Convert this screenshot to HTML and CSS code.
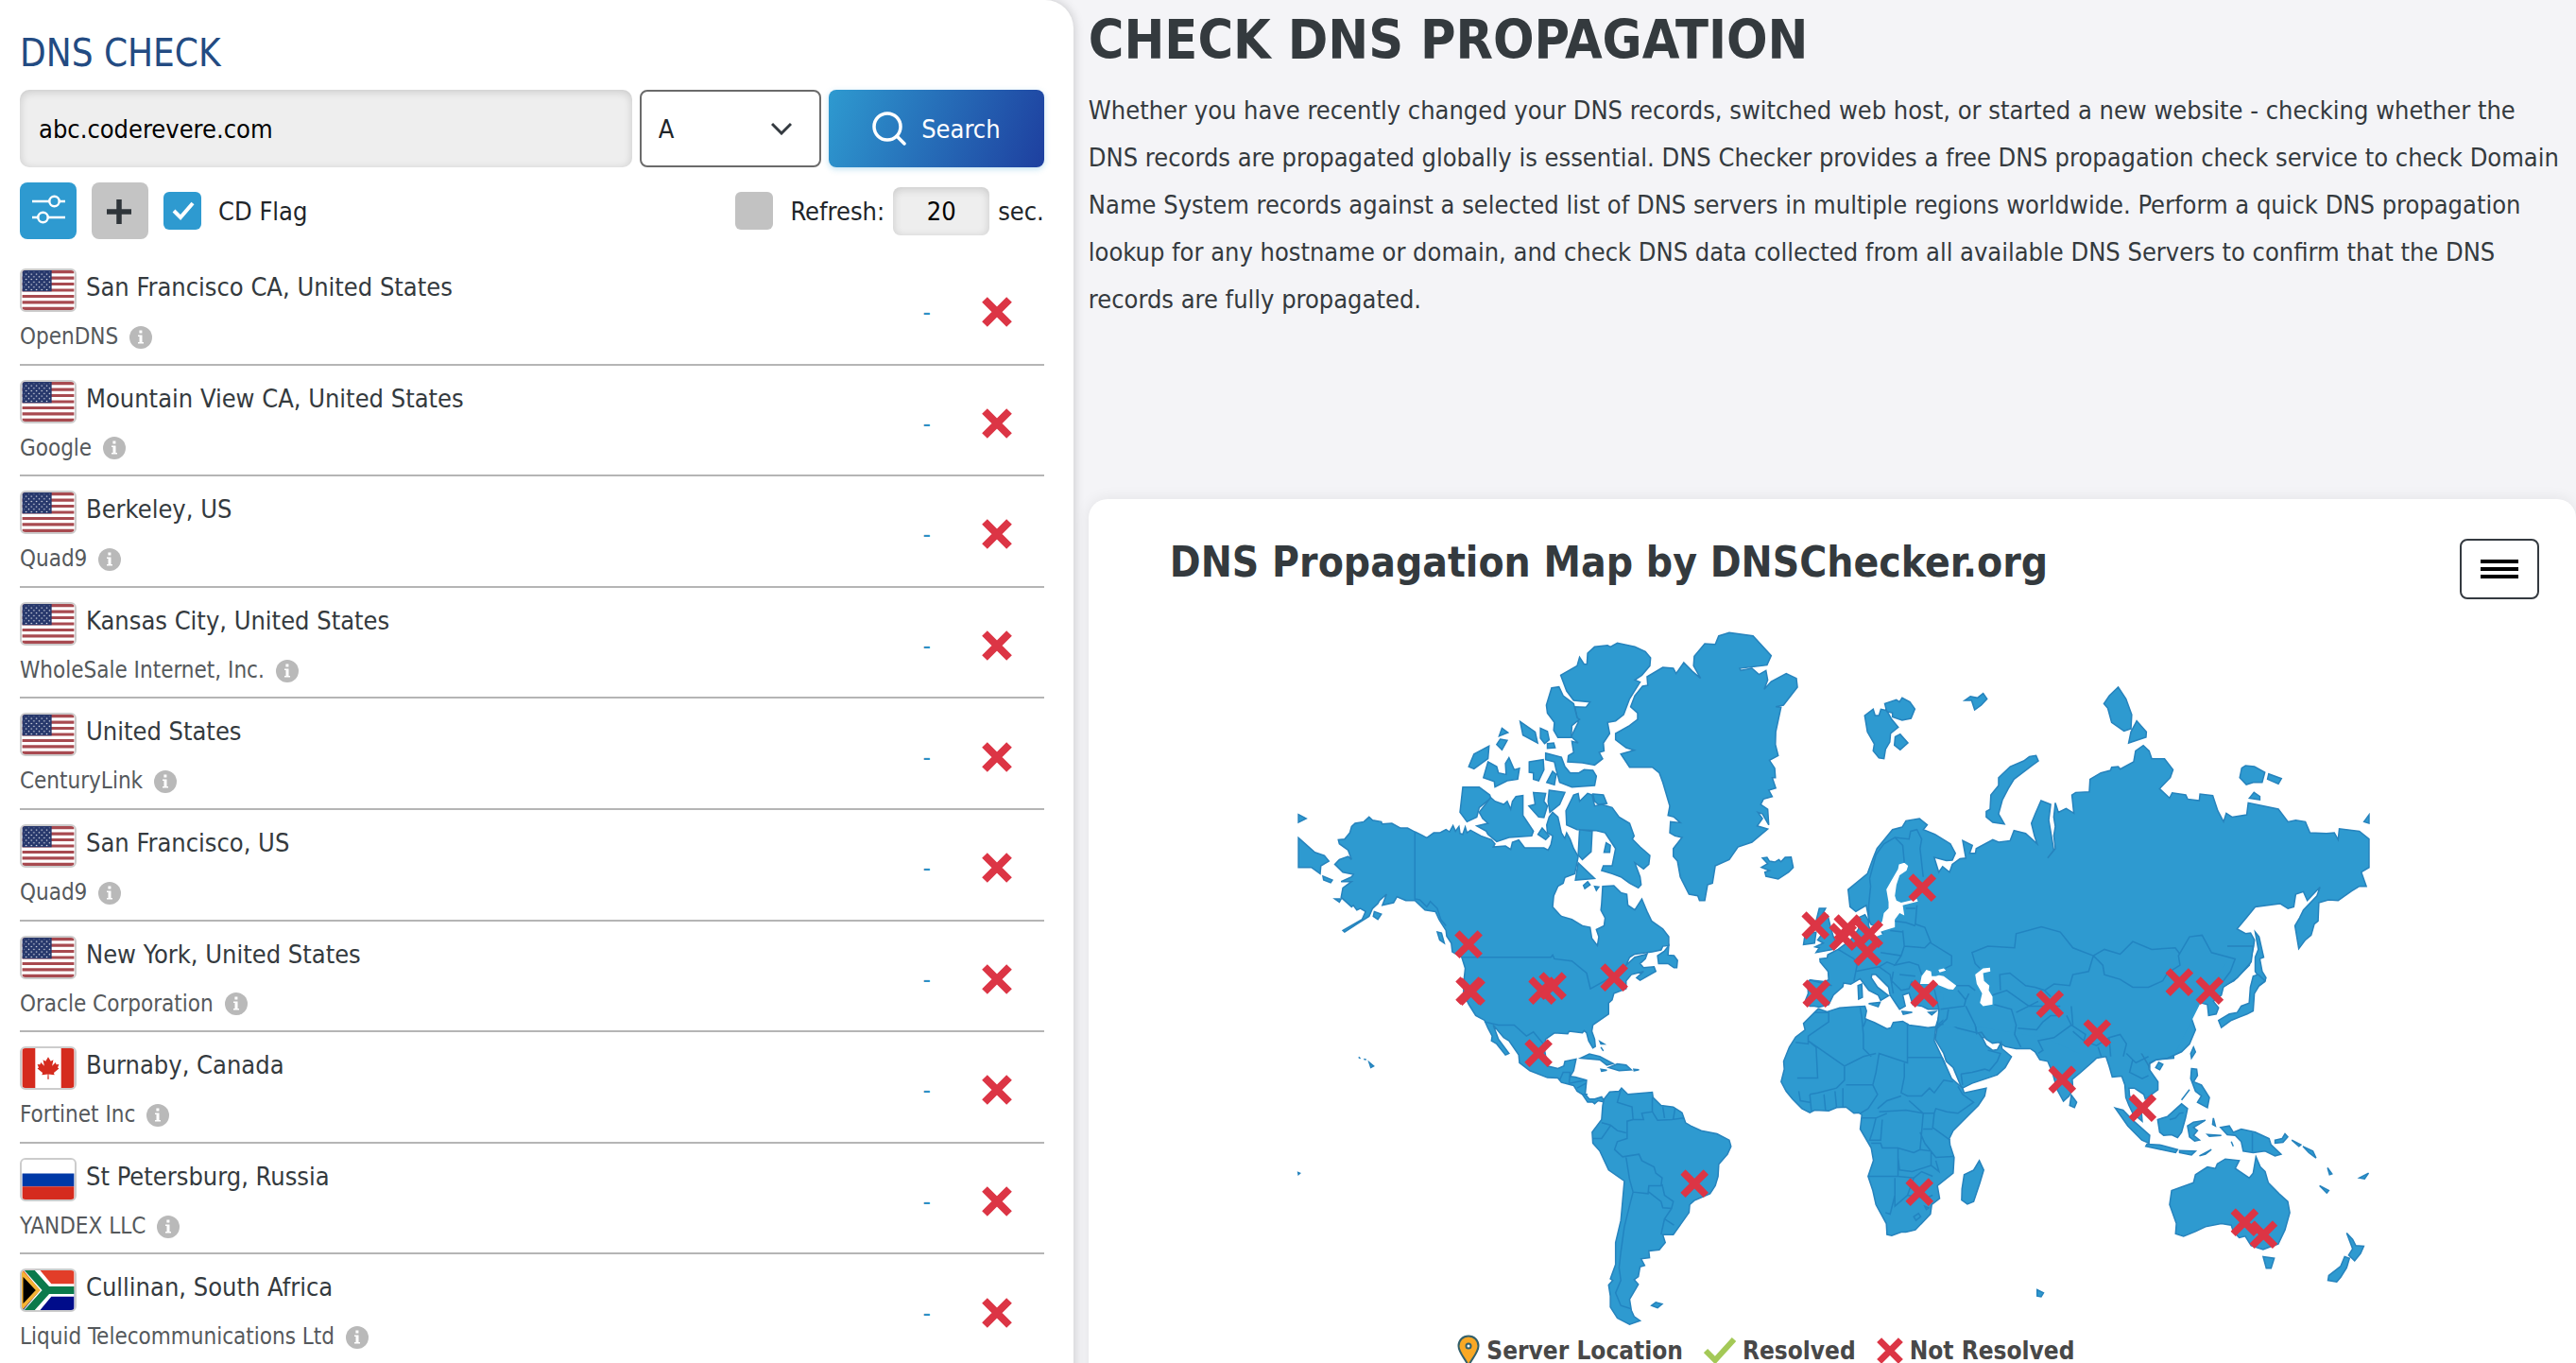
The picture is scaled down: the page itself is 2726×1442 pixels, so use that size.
FILE: index.html
```html
<!DOCTYPE html>
<html lang="en">

<head>
  <meta charset="UTF-8" />
  <meta name="viewport" content="width=device-width, initial-scale=1.0" />
  <title>DNS Checker - DNS Propagation Check</title>
  <link rel="stylesheet" href="styles.css">
</head>

<body>
  <!-- shared icons -->
  <svg class="sprite" aria-hidden="true">
    <defs>
      <pattern id="stars" width="6" height="6" patternUnits="userSpaceOnUse">
        <circle cx="1.5" cy="1.5" r="0.8" fill="#fff" />
        <circle cx="4.5" cy="4.5" r="0.8" fill="#fff" />
      </pattern>
    </defs>
    <symbol id="cross" viewBox="0 0 32 32">
      <path d="M3 3L29 29M29 3L3 29" fill="none" stroke="#dc3545" stroke-width="8" />
    </symbol>
    <symbol id="info" viewBox="0 0 24 24">
      <circle cx="12" cy="12" r="12" fill="#b9b9b9" />
      <path d="M10.400 4.500h3v3h-3zM9 9.500h4.500v7.500h1.500v1.500H9V17h1.500v-6H9z" fill="#fff" />
    </symbol>
    <symbol id="flag-us" viewBox="0 0 60 46">
      <path d="M0 0h60v46H0z" fill="#fff" />
      <path d="M0 1.800h60M0 8.800h60M0 15.900h60M0 23h60M0 30.100h60M0 37.200h60M0 44.300h60" stroke="#a84a50" stroke-width="3.500" />
      <path d="M0 0h34v24.500H0z" fill="#26376b" />
      <path d="M2 2h31v22H2z" fill="url(#stars)" />
    </symbol>
    <symbol id="flag-ca" viewBox="0 0 60 46">
      <path d="M0 0h60v46H0z" fill="#fff" />
      <path d="M0 0h15v46H0zM45 0h15v46H45z" fill="#d52b1e" />
      <path d="M30 10l-3 5-3-1.500 1.500 7-4-4-1 2.500-3-.5 1.500 4-1.500 1 6 5-.8 2.500 6.800-1-.3 6h1.600l-.3-6 6.800 1-.8-2.500 6-5-1.500-1 1.500-4-3 .5-1-2.500-4 4 1.500-7-3 1.500z" fill="#d52b1e" />
    </symbol>
    <symbol id="flag-ru" viewBox="0 0 60 46">
      <path d="M0 0h60v16H0z" fill="#fff" />
      <path d="M0 16h60v15H0z" fill="#0039a6" />
      <path d="M0 31h60v15H0z" fill="#d52b1e" />
    </symbol>
    <symbol id="flag-za" viewBox="0 0 60 46">
      <path d="M0 0h60v23H0z" fill="#e23d28" />
      <path d="M0 23h60v23H0z" fill="#000c8a" />
      <path d="M6 -6L30 23 6 52M30 23H60" fill="none" stroke="#fff" stroke-width="15" />
      <path d="M-4 -4L0 0 21 23 0 46z" fill="#f5b335" />
      <path d="M3 -6L29 23 3 52M29 23H60" fill="none" stroke="#0b7a4b" stroke-width="9" />
      <path d="M0 5L17 23 0 41z" fill="#000" stroke="#f5b335" stroke-width="2" />
    </symbol>
  </svg>

  <div class="page">
    <section class="checker">
      <h2 class="checker-title">DNS CHECK</h2>

      <form class="search-form">
        <input class="domain-input" type="text" aria-label="Domain" value="abc.coderevere.com" />
        <select class="record-select" aria-label="Record type">
          <option>A</option>
        </select>
        <button class="search-btn" type="button">
          <svg viewBox="0 0 36 36" fill="none" stroke="#fff" stroke-width="3.500" stroke-linecap="round">
            <circle cx="16" cy="16" r="14" />
            <path d="M26 26L34 34" />
          </svg>
          Search
        </button>
      </form>

      <div class="options">
        <button class="icon-btn filter-btn" type="button" aria-label="Filters">
          <svg viewBox="0 0 60 60" fill="none" stroke="#fff" stroke-width="2.500">
            <path d="M13 20H31M42 20H48M13 37H19M30 37H48" />
            <circle cx="36.500" cy="20" r="5.200" />
            <circle cx="24.500" cy="37" r="5.200" />
          </svg>
        </button>
        <button class="icon-btn add-btn" type="button" aria-label="Add server">
          <svg viewBox="0 0 60 60" fill="none" stroke="#2f353a" stroke-width="5.500">
            <path d="M29 18V44M16 31H42" />
          </svg>
        </button>
        <label class="check-label">
          <input type="checkbox" checked />
          CD Flag
        </label>
        <div class="refresh">
          <label class="check-label">
            <input type="checkbox" />
            Refresh:
          </label>
          <input class="seconds-input" type="text" aria-label="Refresh seconds" value="20" />
          <span>sec.</span>
        </div>
      </div>

      <ul class="servers">
        <li class="server">
          <div class="location"><svg class="flag"><use href="#flag-us" /></svg>San Francisco CA, United States</div>
          <div class="provider">OpenDNS <svg class="info"><use href="#info" /></svg></div>
          <span class="result">-</span>
          <svg class="status"><use href="#cross" /></svg>
        </li>
        <li class="server">
          <div class="location"><svg class="flag"><use href="#flag-us" /></svg>Mountain View CA, United States</div>
          <div class="provider">Google <svg class="info"><use href="#info" /></svg></div>
          <span class="result">-</span>
          <svg class="status"><use href="#cross" /></svg>
        </li>
        <li class="server">
          <div class="location"><svg class="flag"><use href="#flag-us" /></svg>Berkeley, US</div>
          <div class="provider">Quad9 <svg class="info"><use href="#info" /></svg></div>
          <span class="result">-</span>
          <svg class="status"><use href="#cross" /></svg>
        </li>
        <li class="server">
          <div class="location"><svg class="flag"><use href="#flag-us" /></svg>Kansas City, United States</div>
          <div class="provider">WholeSale Internet, Inc. <svg class="info"><use href="#info" /></svg></div>
          <span class="result">-</span>
          <svg class="status"><use href="#cross" /></svg>
        </li>
        <li class="server">
          <div class="location"><svg class="flag"><use href="#flag-us" /></svg>United States</div>
          <div class="provider">CenturyLink <svg class="info"><use href="#info" /></svg></div>
          <span class="result">-</span>
          <svg class="status"><use href="#cross" /></svg>
        </li>
        <li class="server">
          <div class="location"><svg class="flag"><use href="#flag-us" /></svg>San Francisco, US</div>
          <div class="provider">Quad9 <svg class="info"><use href="#info" /></svg></div>
          <span class="result">-</span>
          <svg class="status"><use href="#cross" /></svg>
        </li>
        <li class="server">
          <div class="location"><svg class="flag"><use href="#flag-us" /></svg>New York, United States</div>
          <div class="provider">Oracle Corporation <svg class="info"><use href="#info" /></svg></div>
          <span class="result">-</span>
          <svg class="status"><use href="#cross" /></svg>
        </li>
        <li class="server">
          <div class="location"><svg class="flag"><use href="#flag-ca" /></svg>Burnaby, Canada</div>
          <div class="provider">Fortinet Inc <svg class="info"><use href="#info" /></svg></div>
          <span class="result">-</span>
          <svg class="status"><use href="#cross" /></svg>
        </li>
        <li class="server">
          <div class="location"><svg class="flag"><use href="#flag-ru" /></svg>St Petersburg, Russia</div>
          <div class="provider">YANDEX LLC <svg class="info"><use href="#info" /></svg></div>
          <span class="result">-</span>
          <svg class="status"><use href="#cross" /></svg>
        </li>
        <li class="server">
          <div class="location"><svg class="flag"><use href="#flag-za" /></svg>Cullinan, South Africa</div>
          <div class="provider">Liquid Telecommunications Ltd <svg class="info"><use href="#info" /></svg></div>
          <span class="result">-</span>
          <svg class="status"><use href="#cross" /></svg>
        </li>
      </ul>
    </section>

    <main class="content">
      <div class="intro">
        <h1>CHECK DNS PROPAGATION</h1>
        <p>Whether you have recently changed your DNS records, switched web host, or started a new website - checking whether the DNS records are propagated globally is essential. DNS Checker provides a free DNS propagation check service to check Domain Name System records against a selected list of DNS servers in multiple regions worldwide. Perform a quick DNS propagation lookup for any hostname or domain, and check DNS data collected from all available DNS Servers to confirm that the DNS records are fully propagated.</p>
      </div>

      <section class="map-card">
        <div class="map-header">
          <h2>DNS Propagation Map by DNSChecker.org</h2>
          <button class="menu-btn" type="button" aria-label="Menu">
            <svg viewBox="0 0 40 24" stroke="#000" stroke-width="4"><path d="M0 4H40M0 12H40M0 20H40" /></svg>
          </button>
        </div>

        <svg class="map" viewBox="0 0 1133 742" role="img" aria-label="World map of server results">
          <!-- North America and Greenland -->
          <g transform="translate(-12 -12) scale(0.3699 0.3333)">
            <path class="land" d="M240 640L250 650 275 655 277 662 305 660 330 675 350 675 371 687 390 697 405 706 425 690 442 690 460 680 470 687 480 667 487 685 497 670 500 692 508 695 515 672 520 690 530 682 560 700 590 712 600 725 595 735 630 732 645 743 650 720 668 713 685 738 740 738 752 745 760 728 765 700 750 690 748 665 755 640 765 625 780 640 790 690 800 708 805 690 815 710 825 740 838 765 832 800 828 820 800 832 795 850 780 860 768 890 765 925 785 950 790 955 820 965 850 985 872 990 877 1025 893 1048 897 1020 890 997 912 985 915 960 903 935 905 915 908 860 940 858 960 880 977 885 980 920 1000 935 1020 900 1035 940 1048 970 1080 995 1097 1020 1097 1048 1080 1050 1075 1062 1050 1068 1000 1075 985 1085 975 1110 1000 1085 1035 1075 1030 1090 1015 1105 1025 1118 1055 1115 1060 1130 1015 1158 1005 1150 1025 1130 990 1140 975 1160 975 1185 940 1200 935 1220 925 1230 925 1265 880 1300 877 1320 885 1345 887 1368 880 1373 868 1350 862 1325 855 1318 850 1325 812 1320 808 1328 770 1325 745 1345 742 1380 750 1430 780 1438 797 1430 800 1415 832 1408 825 1445 815 1463 830 1465 862 1475 858 1520 870 1535 885 1535 905 1528 915 1545 895 1540 885 1550 880 1545 865 1545 850 1520 835 1510 825 1492 790 1482 780 1468 750 1467 700 1445 670 1420 668 1395 640 1350 625 1340 595 1300 610 1345 640 1390 630 1395 605 1360 590 1350 592 1335 580 1310 570 1285 545 1270 525 1235 510 1200 512 1150 515 1120 505 1085 478 1068 475 1040 462 1018 460 1000 440 965 430 940 400 935 371 905 345 905 320 893 310 912 278 920 290 885 270 905 265 915 250 930 240 955 205 980 170 1005 165 1000 220 965 230 940 215 930 205 935 195 920 190 925 160 895 165 865 190 845 160 845 190 830 195 822 165 815 142 790 155 775 180 765 190 775 180 745 155 725 152 712 170 710 185 690 190 670 200 660 225 655Z" />
            <path class="land" d="M1240 65L1270 55 1338 65 1390 128 1378 158 1300 168 1303 175 1335 168 1355 188 1375 175 1380 205 1370 235 1390 210 1433 185 1462 200 1465 228 1425 285 1403 290 1418 292 1403 370 1402 410 1410 445 1385 460 1400 485 1402 515 1393 515 1403 548 1383 555 1393 575 1368 583 1360 600 1380 615 1383 665 1365 630 1352 625 1365 645 1350 668 1380 678 1335 720 1295 735 1270 775 1230 795 1222 850 1208 855 1200 905 1185 905 1180 890 1155 885 1130 830 1122 780 1110 765 1110 740 1135 705 1115 700 1100 690 1102 655 1130 658 1112 640 1095 635 1100 605 1080 530 1070 500 1050 482 985 482 960 440 998 428 975 420 945 395 945 375 985 350 1008 330 1008 310 988 290 1000 255 1022 225 1037 222 1035 195 1080 165 1110 168 1118 185 1140 150 1165 178 1188 200 1168 160 1170 130 1200 90 1230 92Z" />
            <path class="land" d="M865 120L885 100 922 95 930 100 950 88 1000 100 1030 115 1045 135 1043 160 1020 190 1000 205 1015 212 985 265 968 315 945 335 922 340 928 375 910 405 912 430 898 435 908 455 885 475 850 468 808 465 810 445 825 435 820 400 838 405 818 385 838 340 828 290 860 292 872 275 825 270 805 240 788 190 835 160 842 133 855 155 863 155Z" />
            <path class="land" d="M762 230L783 227 795 255 825 280 835 325 842 330 820 350 818 388 780 388 768 365 770 340 750 310 747 285Z" />
            <path class="land" d="M672 337L715 370 722 405 680 380ZM730 358L750 368 755 395 742 407 730 390ZM750 407L768 405 772 420 750 422ZM620 358L637 372 612 383ZM615 393L635 397 620 427 605 410ZM583 415L580 455 540 487 525 480 540 440ZM580 465L605 480 610 500 632 505 630 470 640 452 655 490 670 485 665 520 635 525 600 545 598 527 567 515Z" />
            <path class="land" d="M698 465L738 458 740 490 725 525 710 520 710 500 698 498ZM765 495L775 505 770 538 748 530ZM745 437L790 450 800 480 815 500 840 500 855 490 880 492 890 510 885 540 820 545 785 530 775 490 770 465 745 458Z" />
            <path class="land" d="M508 545L555 545 585 570 588 580 555 610 548 640 520 655 500 625Z" />
            <path class="land" d="M588 578L600 590 625 600 635 590 645 615 650 590 660 575 680 572 680 635 710 685 705 700 640 705 605 718 580 695 575 685 548 668 580 660 565 645 555 625Z" />
            <path class="land" d="M710 562L745 565 740 590 750 605 740 642 725 640 697 605 715 600ZM755 555L800 562 785 600 757 625 752 590ZM735 675L755 700 745 712 723 695ZM803 620L825 570 838 565 842 590 865 565 878 570 885 605 905 600 935 610 955 640 985 660 998 700 993 710 1015 735 1043 762 1040 790 1025 805 1000 785 1015 830 1018 855 1010 865 985 850 960 830 935 820 905 810 910 795 935 795 945 740 915 690 890 683 835 680 805 665ZM842 680L878 685 875 750 850 775 838 760ZM880 567L910 570 920 597 895 600 885 590ZM918 722L930 730 928 752 912 752ZM838 785L885 835 830 840ZM865 845L872 855 857 867 853 857ZM885 860L897 862 890 873Z" />
            <path class="land" d="M1365 770L1378 768 1385 780 1400 783 1412 775 1418 782 1430 768 1447 767 1453 800 1440 815 1410 837 1375 828 1372 815 1385 810 1362 800 1380 788ZM1097 1048L1085 1065 1065 1080 1068 1105 1095 1105 1112 1118 1120 1118 1122 1095 1112 1080 1095 1078ZM38 632L60 645 38 657ZM38 706L85 752 112 762 125 780 102 795 100 820 75 800 38 800ZM108 828L135 840 130 848 110 840ZM255 940L275 948 265 965 252 955ZM435 1005L447 1008 455 1040 442 1030ZM142 900L160 900 155 910Z" />
            <path class="border" d="M371 687V900L385 903 405 925 415 908 435 930 445 965 460 985M505 1085H760L765 1078 770 1090 820 1097 862 1135 873 1185 930 1150 975 1110M570 1290L610 1300 655 1300 690 1335 710 1322 742 1365M785 1475L795 1450 815 1450 812 1485 860 1475M835 1500L860 1485M850 1520L865 1520" />
          </g>

          <!-- Caribbean and South America -->
          <g transform="translate(-12 378) scale(0.3699 0.3333)">
            <path class="land" d="M912 365L928 342 955 340 962 330 980 350 1050 343 1052 360 1075 385 1110 390 1135 408 1145 440 1160 450 1190 465 1235 475 1270 495 1275 515 1265 540 1240 572 1238 610 1230 640 1215 665 1170 687 1157 700 1155 725 1110 795 1080 795 1087 820 1070 843 1040 847 1042 868 1018 872 1028 893 1015 897 1010 928 998 938 1010 953 985 1000 990 1035 998 1055 1015 1068 985 1080 950 1060 930 1025 930 990 925 955 937 940 930 935 945 890 945 820 960 750 970 625 925 590 900 530 880 505 878 470 905 430 908 385Z" />
            <path class="land" d="M845 235L870 222 900 230 938 252 920 257 900 240ZM925 265L950 253 975 257 990 272 955 275ZM903 270L920 273 905 277ZM997 270L1012 272 998 275ZM900 182L912 190 903 190ZM903 200L910 212M210 232L215 236M225 238L232 240M240 248L253 260 245 265ZM37 598L42 600 38 604ZM1048 1020L1060 1010 1078 1015 1065 1027Z" />
            <path class="border" d="M960 335L950 375 992 390 995 430 1025 430 1020 410 1050 405 1050 360M1050 405L1065 432 1105 430 1140 425M1080 390L1085 425M1115 395L1110 428M995 430L978 435 978 490 950 500 942 525 965 548 1012 540 1020 560 1055 580 1060 600 1078 615 1075 640 1040 640 1038 665 995 660 985 620 975 550M905 440L930 447 950 465 975 472M930 450L905 490 880 490M1040 660L1075 690 1080 710 1105 712 1110 690 1085 670 1078 635M1105 712L1085 745 1112 765M1085 745L1075 795M995 660L988 690 970 770 960 850 955 900 960 940 945 980 960 1020 988 1030" />
          </g>

          <!-- Russia and the Arctic -->
          <g transform="translate(508 -12) scale(0.4082 0.3333)">
            <path class="land" d="M320 1100L262 985 245 982 240 970 232 920 205 940 190 925 185 870 235 820 250 770 260 740 300 680 325 672 335 652 370 645 390 665 380 680 410 695 450 725 463 755 455 777 440 778 408 768 420 815 430 797 448 815 455 790 475 772 490 770 482 715 507 730 500 755 515 755 517 740 560 712 575 720 605 715 615 683 645 692 675 725 668 700 660 660 670 630 685 588 710 600 705 650 712 700 718 745 702 770 722 740 718 700 722 670 718 640 722 595 730 625 750 613 770 628 765 570 775 562 810 560 812 520 840 500 865 492 868 482 885 480 890 488 925 465 930 430 950 413 965 430 972 455 1005 455 1027 490 1020 515 992 550 1018 580 1025 563 1060 570 1065 583 1095 588 1097 567 1130 572 1143 620 1158 655 1165 628 1180 640 1218 633 1222 595 1300 615 1325 655 1345 650 1370 655 1382 690 1425 692 1445 690 1455 712 1458 677 1510 685 1535 710 1535 800 1515 815 1528 860 1510 860 1490 875 1455 905 1430 903 1405 912 1403 970 1393 980 1385 1015 1370 1030 1353 1058 1343 985 1355 960 1365 935 1400 890 1408 862 1375 905 1365 877 1345 885 1340 925 1325 930 1305 915 1240 925 1220 955 1193 995 1215 1010 1228 1008 1238 1030 1236 1050 1225 1110 1185 1160 1160 1175 900 1300 500 1300Z" />
            <path class="land" d="M228 318L250 298 255 318 265 318 270 298 285 302 298 330 315 355 295 375 293 402 282 425 278 455 265 452 250 430 253 408 235 370ZM280 280L310 268 318 275 325 262 345 275 358 297 348 327 325 333 300 322 300 310 285 305ZM320 377L340 405 320 427 305 412 307 385ZM487 270L502 257 520 262 535 248 545 265 530 285 513 300 505 270Z" />
            <path class="land" d="M672 445L678 462 660 478 615 520 600 550 585 585 575 630 590 662 560 657 543 640 543 622 553 615 555 570 575 540 575 515 605 480 640 462 655 448ZM885 228L905 265 920 315 918 360 900 367 868 340 858 295 848 280 862 255ZM933 335L958 370 957 387 912 405 918 370ZM1205 485L1215 477 1238 480 1265 498 1258 530 1235 530 1217 537 1200 515ZM1275 503L1308 518 1300 535 1272 520ZM1237 562L1252 575 1252 585 1225 580ZM1535 633V660L1522 655Z" />
            <path class="land" d="M1240 1005L1250 1020 1262 1085 1252 1090 1258 1130 1268 1150 1265 1162 1245 1180 1240 1170 1248 1145 1240 1130 1240 1085 1248 1060Z" />
          </g>

          <!-- Europe -->
          <g transform="translate(518 188) scale(0.3333)">
            <path class="land" d="M300 480L262 385 262 370 250 350 232 358 230 395 205 430 165 460 132 477 130 487 107 490 108 500 133 530 135 557 120 562 75 557 68 565 70 600 62 620 75 640 90 640 105 643 135 635 150 605 180 578 182 567 205 570 235 553 262 590 292 605 300 622 325 607 290 580 270 550 272 540 285 540 325 580 330 605 350 635 360 650 378 640 370 605 390 598 402 635 430 640 450 650 485 650 487 665 475 705 480 740 700 740 700 480Z" />
            <path class="land" d="M105 330L125 330 115 348 132 352 140 385 150 420 160 440 150 460 95 470 105 455 92 452 118 440 100 430 115 410 95 370ZM60 412L95 405 90 440 55 445ZM262 632L298 628 292 642ZM228 575L240 570 242 612 230 618ZM368 657L400 660 372 666ZM452 660L475 657 462 668Z" />
          </g>

          <!-- Arabia, India and Indochina -->
          <g transform="translate(528 388) scale(0.3333)">
            <path class="land" d="M420 -100L455 50 450 105 443 145 470 190 478 215 500 235 523 290 530 300 560 285 640 258 665 235 685 200 655 175 652 155 640 178 625 180 605 165 595 145 580 125 590 123 605 145 625 158 645 155 665 168 700 175 745 175 760 185 775 210 800 215 815 250 830 305 850 342 868 325 880 300 878 272 905 250 945 215 955 205 985 200 995 230 1005 265 1035 262 1045 290 1048 330 1058 355 1070 380 1100 405 1098 380 1080 345 1060 325 1058 300 1075 300 1105 320 1110 335 1150 305 1150 280 1122 240 1120 225 1145 210 1200 205 1200 0Z" />
            <path class="land" d="M60 60L72 48 100 58 140 45 180 42 220 40 225 55 220 80 250 92 290 112 303 108 310 92 340 88 360 100 420 108 445 105 440 150 475 225 495 270 530 300 535 315 605 300 600 325 580 355 550 385 500 435 488 460 490 480 503 520 500 570 450 610 457 650 432 670 428 700 380 750 350 757 335 757 305 768 290 765 288 730 255 670 245 625 230 580 247 530 240 490 205 430 210 385 200 378 185 380 160 360 130 362 105 372 60 370 45 378 20 365 -10 335 -30 310 -46 280 -36 240 -38 215 -20 170 0 138 30 115 25 95Z" />
            <path class="land" d="M583 530L597 560 585 600 565 660 545 668 527 655 528 620 535 575 565 560ZM875 322L892 345 885 362 870 355Z" />
            <path class="border" d="M60 60L105 60 105 90 40 135V160L0 155M40 150L155 230 215 200 255 190M40 150L65 170 70 268H5M205 45L210 75 215 130 215 175 240 200M225 80L215 105M355 95V220L265 190 255 250 245 290M355 203H465M345 220V265L335 315 355 325 400 325 425 300 440 315 470 275 500 280M465 203L475 225M155 230V275L130 300 70 315 45 320M160 290L245 290 260 320 230 365 205 380M150 300L150 360M90 320L95 370M125 310L130 362M45 320L50 372M10 310L15 340 45 345M260 365L290 340 335 325M265 375L350 370 405 380 400 440 395 495 375 505 325 490 325 580H230M405 380L360 340M405 380H440L445 365 480 375 515 380 565 345 530 320 515 295M440 380L435 425 490 465M405 430H435M395 440L410 475 445 520 500 517M210 395H255L290 380M255 395L245 435 235 465 270 465 275 400M240 475H270L275 490 325 490M325 520L330 560 370 565 430 545V500L395 495M430 545L455 565 445 530M235 580H325L375 585 400 565 435 580M375 585L355 640 315 675V585M315 640L300 700 285 695M355 640L410 650 435 640M375 708L390 698 397 708 382 720ZM410 675L422 680 415 685Z" />
            <path class="border" d="M525 255L560 250 600 240 615 245 640 215 650 190 610 180M450 100L485 95 515 110 575 125 570 95 540 60 545 30M450 100L480 75 510 45M525 255L530 290" />
          </g>

          <!-- East Asia, Oceania and Australia -->
          <g transform="translate(488 338) scale(0.4209 0.3333)">
            <path class="land" d="M900 200L985 385 985 370 1000 360 1030 355 1065 335 1085 310 1100 265 1085 210 1100 188 1075 180 1085 165 1098 150 1100 175 1130 185 1133 220 1152 215 1158 195 1145 175 1165 155 1170 130 1205 100 1240 50 1245 0H900Z" />
            <path class="land" d="M1245 95L1258 90 1275 110 1260 125 1248 150 1245 205 1230 215 1210 225 1190 235 1165 258 1158 235 1185 215 1205 210 1215 190 1235 180 1238 130ZM1008 368L1018 375 1010 392 1000 385ZM1095 320L1100 335 1090 355 1088 340ZM1090 388L1103 390 1105 410 1095 430 1115 440 1125 460 1135 480 1130 512 1105 495 1115 475 1100 460 1088 420ZM1085 455L1065 488" />
            <path class="land" d="M898 513L918 520 945 555 985 600 983 625 965 615 930 570ZM978 628L1010 630 1055 645 1050 655 975 635ZM1060 648L1100 650 1090 662 1060 655ZM1110 665L1140 645 1125 660ZM1005 550L1030 540 1065 500 1080 515 1075 545 1065 590 1055 607 1040 598 1020 600 1010 590ZM1080 570L1095 558 1125 552 1095 575 1105 585 1095 600 1110 615 1098 618 1085 605ZM1145 545L1150 570 1143 565ZM1130 597L1165 600 1135 603ZM1163 575L1185 570 1195 590 1215 580 1250 590 1285 610 1290 630 1315 660 1300 665 1275 650 1245 655 1220 650 1215 620 1200 600 1180 598ZM1300 615L1318 610 1325 595 1332 605 1320 622 1300 625ZM1342 615L1365 630 1360 635ZM1370 635L1395 650 1403 672 1385 655ZM1190 620L1195 635" />
            <path class="land" d="M1252 668L1263 700 1275 715 1283 750 1310 785 1332 810 1337 845 1325 900 1308 945 1285 955 1270 962 1240 950 1225 920 1210 925 1195 905 1190 885 1165 880 1125 890 1100 905 1070 920 1050 912 1052 880 1035 820 1040 775 1095 750 1100 725 1130 700 1150 705 1155 690 1175 675 1210 680 1200 705 1235 735 1245 720ZM1270 985L1298 990 1290 1022 1278 1022ZM1480 910L1495 930 1503 950 1523 952 1515 975 1500 998 1485 980 1495 960ZM1475 985L1487 990 1480 1020 1465 1050 1455 1065 1433 1060 1435 1045 1465 1015ZM1412 760L1435 775 1430 783ZM1432 703L1443 722 1437 725ZM1512 735L1535 720 1525 738ZM702 1090L718 1100 712 1112 702 1110Z" />
            <path class="border" d="M1243 592V652M1035 550L1050 545 1060 530 1070 528" />
          </g>

          <!-- interior fill, seas, then the Eurasian borders -->
          <g transform="translate(518 188) scale(0.3333)">
            <path class="inland" d="M285 420L335 400 430 300 600 300 1400 300V500L1350 560 1235 790 930 790 820 740 690 720 580 700 500 710 498 670 500 600 340 525 280 500Z" />
            <path class="water" d="M375 185L387 195 382 210 360 225 350 255 345 290 350 305 365 312 415 300 418 308 370 320 375 352 360 345 345 365 345 390 310 400 290 408 285 400 305 370 310 345 325 330 325 310 318 270 335 240 355 205 358 190ZM430 545L445 525 460 530 462 545 475 545 485 542 500 545 540 575 530 588 515 586 480 572 455 570 425 570ZM483 525L500 520 507 527 487 533ZM600 540L625 520 647 518 648 530 625 535 628 560 645 575 643 590 655 610 655 635 625 640 615 630 622 600 605 570Z" />
            <path class="border" d="M435 230L425 140 430 110 415 80 395 85 390 110 345 105 310 125 285 160 265 235 268 260 262 320 262 370M345 105L370 130 375 185M415 320L410 380 440 390 460 440 525 480 525 510 505 520M345 370L380 375 410 385M410 330L380 330M370 400L375 450 440 455 460 435M370 405L330 400M375 450L365 480 300 470M365 480L345 510 390 500 420 510 430 540M345 510L320 500 295 515 220 530M165 460L215 490 225 510 215 560M75 557L145 575M340 530L335 560 365 590 390 585 400 560M295 515L330 540 340 600M360 540L410 545M540 575L580 575 600 590M545 590L570 620 580 600M490 650L565 640 570 620M570 640L600 700 605 730M515 650L510 680 480 710" />
            <path class="border" d="M600 505L590 470 640 450 725 455 730 410 810 388 870 405 910 455 975 480 960 530 910 540 900 575 850 570 820 590M600 505L615 520M680 590L678 540 710 535 760 575 790 580 820 590 840 610M655 605L700 590 770 640 800 625M660 635L715 650 730 700 725 730 745 770M730 660L770 640 870 640M735 710L795 715 815 690 840 670 860 670M890 670L905 700 850 740 800 750 815 780 800 790M905 700L950 730 945 750 910 720M905 640L910 700M975 480L1010 460 1060 475 1100 435 1160 460 1235 455 1250 475M975 480L1005 510 1010 540 1060 555 1100 580 1150 580 1195 560 1210 535 1250 510 1245 480 1280 420 1320 415 1350 470 1425 490 1410 530 1380 570M945 750L985 765 1025 740 1060 730 1080 760 1070 800M1025 740L1030 800M990 770L1000 800M1080 790L1110 820 1150 800M1100 810L1090 850 1130 870 1150 860" />
          </g>

          <!-- server markers -->
          <g class="markers">
            <use href="#cross" x="167" y="321" width="30" height="30" />
            <use href="#cross" x="168" y="370" width="30" height="30" />
            <use href="#cross" x="170" y="371" width="30" height="30" />
            <use href="#cross" x="245" y="370" width="30" height="30" />
            <use href="#cross" x="256" y="365" width="30" height="30" />
            <use href="#cross" x="321" y="356" width="30" height="30" />
            <use href="#cross" x="241" y="436" width="30" height="30" />
            <use href="#cross" x="406" y="574" width="30" height="30" />
            <use href="#cross" x="647" y="261" width="30" height="30" />
            <use href="#cross" x="534" y="301" width="30" height="30" />
            <use href="#cross" x="568" y="304" width="30" height="30" />
            <use href="#cross" x="563" y="313" width="30" height="30" />
            <use href="#cross" x="591" y="310" width="30" height="30" />
            <use href="#cross" x="589" y="329" width="30" height="30" />
            <use href="#cross" x="535" y="373" width="30" height="30" />
            <use href="#cross" x="649" y="373" width="30" height="30" />
            <use href="#cross" x="782" y="384" width="30" height="30" />
            <use href="#cross" x="832" y="415" width="30" height="30" />
            <use href="#cross" x="795" y="464" width="30" height="30" />
            <use href="#cross" x="880" y="494" width="30" height="30" />
            <use href="#cross" x="644" y="583" width="30" height="30" />
            <use href="#cross" x="919" y="361" width="30" height="30" />
            <use href="#cross" x="951" y="370" width="30" height="30" />
            <use href="#cross" x="988" y="615" width="30" height="30" />
            <use href="#cross" x="1008" y="628" width="30" height="30" />
          </g>
        </svg>

        <div class="legend">
          <span class="legend-item">
            <svg viewBox="0 0 24 34" width="24" height="34">
              <path d="M12 1.500C6 1.500 1.500 6 1.500 12 1.500 19 9 26 12 33 15 26 22.500 19 22.500 12 22.500 6 18 1.500 12 1.500z" fill="#f9a825" stroke="#33606b" stroke-width="2" />
              <circle cx="12" cy="12" r="2.500" fill="#fff" stroke="#33606b" stroke-width="2" />
            </svg>
            Server Location
          </span>
          <span class="legend-item">
            <svg viewBox="0 0 34 30" width="34" height="30">
              <path d="M2 15L12 25 32 3" fill="none" stroke="#a4c957" stroke-width="6" />
            </svg>
            Resolved
          </span>
          <span class="legend-item">
            <svg width="28" height="28"><use href="#cross" /></svg>
            Not Resolved
          </span>
        </div>
      </section>
    </main>
  </div>
</body>

</html>
```
FILE: styles.css
```css
* {
  box-sizing: border-box;
}

html,
body {
  margin: 0;
  height: 100%;
  overflow: hidden;
}

body {
  background: #f4f4f7;
  color: #343a3e;
  font-family: 'DejaVu Sans Condensed', 'Noto Sans', sans-serif;
  font-size: 27px;
}

h1,
h2,
p,
ul {
  margin: 0;
  padding: 0;
}

button,
input,
select {
  font: inherit;
  border: 0;
  margin: 0;
}

.sprite {
  position: absolute;
  width: 0;
  height: 0;
}

.page {
  display: grid;
  grid-template-columns: 5fr 7fr;
  min-height: 100%;
}

/* left panel */
.checker {
  background: #fff;
  border-radius: 0 30px 0 0;
  box-shadow: 0 0 12px rgba(0, 0, 0, 0.2);
  padding: 32px 31px 0 21px;
}

.checker-title {
  color: #234b82;
  font-size: 40px;
  font-weight: 400;
  line-height: 48px;
}

.search-form {
  display: flex;
  gap: 8px;
  margin-top: 15px;
}

.domain-input,
.seconds-input {
  background: #eee;
  color: #000;
  box-shadow: inset 0 2px 10px rgba(0, 0, 0, 0.16);
}

.domain-input {
  flex: 1;
  min-width: 0;
  height: 82px;
  padding: 0 20px;
  border-radius: 10px;
}

.record-select {
  appearance: none;
  width: 192px;
  height: 82px;
  padding: 0 18px;
  border: 2px solid #6b6b6b;
  border-radius: 8px;
  color: #212529;
  background: #fff url("data:image/svg+xml,%3Csvg xmlns='http://www.w3.org/2000/svg' viewBox='0 0 22 14' fill='none' stroke='%23343a40' stroke-width='3'%3E%3Cpath d='M1 2L11 12 21 2'/%3E%3C/svg%3E") no-repeat right 29px center / 22px 14px;
}

.search-btn {
  display: flex;
  align-items: center;
  justify-content: center;
  gap: 16px;
  width: 228px;
  height: 82px;
  border-radius: 8px;
  color: #fff;
  background: linear-gradient(110deg, #2e9ad0, #1e3f9f);
  box-shadow: 0 2px 6px rgba(46, 154, 208, 0.3);
}

.search-btn svg {
  width: 36px;
  height: 36px;
}

.options {
  display: flex;
  align-items: center;
  gap: 16px;
  margin-top: 16px;
  color: #212529;
}

.icon-btn {
  width: 60px;
  height: 60px;
  padding: 0;
  border-radius: 8px;
}

.icon-btn svg {
  display: block;
}

.filter-btn {
  background: #2e9ad0;
}

.add-btn {
  background: #c4c4c4;
}

.check-label {
  display: flex;
  align-items: center;
  gap: 18px;
}

.check-label input {
  appearance: none;
  width: 40px;
  height: 40px;
  border-radius: 6px;
  background: #c2c2c2;
}

.check-label input:checked {
  background: #2e9ad0 url("data:image/svg+xml,%3Csvg xmlns='http://www.w3.org/2000/svg' viewBox='0 0 40 40' fill='none' stroke='white' stroke-width='4'%3E%3Cpath d='M11 20L18 27 31 12'/%3E%3C/svg%3E");
}

.refresh {
  display: flex;
  align-items: center;
  gap: 9px;
  margin-left: auto;
}

.seconds-input {
  width: 102px;
  height: 51px;
  border-radius: 8px;
  text-align: center;
}

/* server list */
.servers {
  list-style: none;
  margin-top: 16px;
}

.server {
  display: grid;
  grid-template-columns: 1fr auto auto;
  align-items: center;
  column-gap: 54px;
  padding: 15px 34px 8px 0;
  border-bottom: 2px solid #b5b5b5;
}

.location {
  display: flex;
  align-items: flex-start;
  gap: 10px;
  line-height: 1.5;
}

.provider {
  display: flex;
  align-items: center;
  gap: 12px;
  grid-row: 2;
  margin-top: 7px;
  color: #55595c;
  font-size: 24px;
  line-height: 1.65;
}

.flag {
  width: 60px;
  height: 46px;
  border: 2px solid #ccc;
  border-radius: 6px;
}

.info {
  width: 24px;
  height: 24px;
}

.result {
  grid-column: 2;
  grid-row: 1 / 3;
  color: #2e8fc4;
  font-size: 26px;
}

.status {
  grid-column: 3;
  grid-row: 1 / 3;
  width: 32px;
  height: 32px;
}

/* right column */
.content {
  padding-left: 16px;
}

.intro {
  min-height: 528px;
}

.intro h1 {
  font-size: 57px;
  line-height: 84px;
}

.intro p {
  padding: 8px 10px 0 0;
  line-height: 50px;
}

.map-card {
  background: #fff;
  border-radius: 20px;
  box-shadow: 0 0 16px rgba(0, 0, 0, 0.08);
  min-height: 960px;
}

.map-header {
  display: flex;
  align-items: flex-start;
  justify-content: space-between;
  padding: 42px 39px 0 86px;
}

.map-header h2 {
  font-size: 44px;
  line-height: 50px;
}

.menu-btn {
  display: grid;
  place-items: center;
  width: 84px;
  height: 64px;
  padding: 0;
  border: 2px solid #343a40;
  border-radius: 8px;
  background: #fff;
}

.menu-btn svg {
  width: 40px;
}

.map {
  display: block;
  width: 72%;
  margin: 29px auto 0;
  overflow: visible;
}

.land {
  fill: #2e9ad0;
  stroke: #2683bd;
  stroke-width: 1.5px;
  vector-effect: non-scaling-stroke;
}

.border {
  fill: none;
  stroke: #2284c1;
  stroke-width: 1.5px;
  vector-effect: non-scaling-stroke;
}

.inland {
  fill: #2e9ad0;
}

.water {
  fill: #fff;
}

.legend {
  display: flex;
  justify-content: center;
  gap: 22px;
  padding: 4px 140px 0 0;
  color: #484848;
  font-size: 26px;
  font-weight: 700;
  line-height: 40px;
}

.legend-item {
  display: flex;
  align-items: center;
  gap: 7px;
}
```
